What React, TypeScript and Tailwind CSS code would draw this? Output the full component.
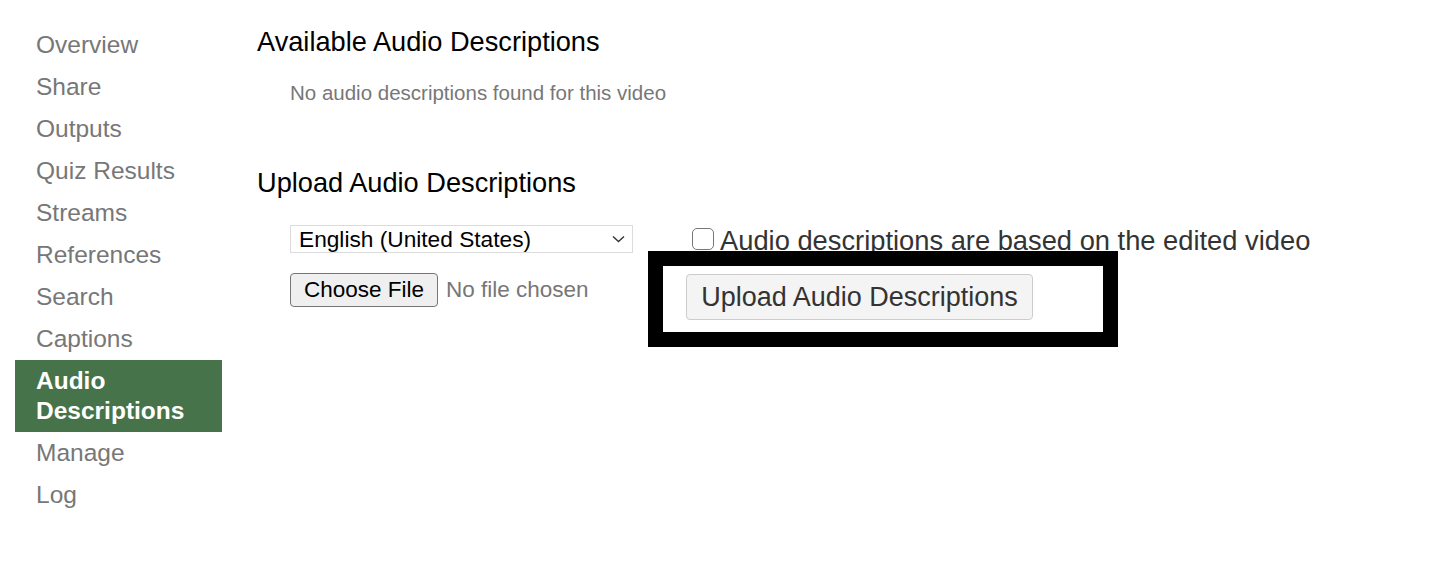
const NAV_ITEMS = [
  'Overview',
  'Share',
  'Outputs',
  'Quiz Results',
  'Streams',
  'References',
  'Search',
  'Captions',
  'Audio Descriptions',
  'Manage',
  'Log',
]

const ACTIVE = 'Audio Descriptions'

function Sidebar() {
  return (
    <nav className="w-[207px] shrink-0 pt-[24px]">
      <ul>
        {NAV_ITEMS.map((item) => {
          const isActive = item === ACTIVE
          return (
            <li
              key={item}
              className={
                isActive
                  ? 'bg-[#46734a] px-[21px] py-[6px] text-[24.5px] leading-[30px] font-bold text-white'
                  : 'px-[21px] py-[6px] text-[24.5px] leading-[30px] text-[#777777]'
              }
            >
              {isActive ? (
                <>
                  Audio
                  <br />
                  Descriptions
                </>
              ) : (
                item
              )}
            </li>
          )
        })}
      </ul>
    </nav>
  )
}

function UploadForm() {
  return (
    <div className="mt-[28px] flex pl-[33px]">
      <div className="flex w-[358px] shrink-0 flex-col gap-[20px]">
        <div className="relative h-[28px] w-[343px] border border-[#dcdcdc] bg-white">
          <span className="absolute left-[8px] top-0 text-[22.7px] leading-[26px] text-black">
            English (United States)
          </span>
          <svg
            className="absolute right-[7px] top-[9px]"
            width="13"
            height="8"
            viewBox="0 0 13 8"
            fill="none"
          >
            <path d="M1 1.5l5.5 5 5.5-5" stroke="#333" strokeWidth="1.4" />
          </svg>
        </div>
        <div className="flex items-center gap-[8px]">
          <button
            type="button"
            className="h-[34px] w-[148px] rounded-[4px] border border-[#767676] bg-[#efefef] text-[22.5px] leading-[32px] text-black"
          >
            Choose File
          </button>
          <span className="text-[22.5px] text-[#777777]">No file chosen</span>
        </div>
      </div>
      <div className="flex flex-col">
        <label className="mt-[3px] flex h-[23px] items-start gap-[6px] pl-[44px]">
          <span className="h-[22px] w-[22px] shrink-0 rounded-[5px] border border-[#777777] bg-white" />
          <span className="whitespace-nowrap text-[27.3px] leading-[25px] text-[#333333]">
            Audio descriptions are based on the edited video
          </span>
        </label>
        <div className="w-[470px] border-[15px] border-black bg-white pb-[12px] pl-[23px] pt-[8px]">
          <button
            type="button"
            className="h-[46px] w-[347px] rounded-[4px] border border-[#cccccc] bg-[#f4f4f4] text-[27px] leading-[44px] text-[#333333]"
          >
            Upload Audio Descriptions
          </button>
        </div>
      </div>
    </div>
  )
}

export default function App() {
  return (
    <div
      className="flex h-[580px] w-[1434px] bg-white pl-[15px]"
      style={{ fontFamily: '"Liberation Sans", Arial, sans-serif' }}
    >
      <Sidebar />
      <main className="pl-[35px] pt-[28px]">
        <h2 className="text-[27.2px] leading-[28px] text-black">Available Audio Descriptions</h2>
        <p className="mt-[25px] pl-[33px] text-[20.5px] leading-[24px] text-[#777777]">
          No audio descriptions found for this video
        </p>
        <h2 className="mt-[64px] text-[27.2px] leading-[28px] text-black">Upload Audio Descriptions</h2>
        <UploadForm />
      </main>
    </div>
  )
}
